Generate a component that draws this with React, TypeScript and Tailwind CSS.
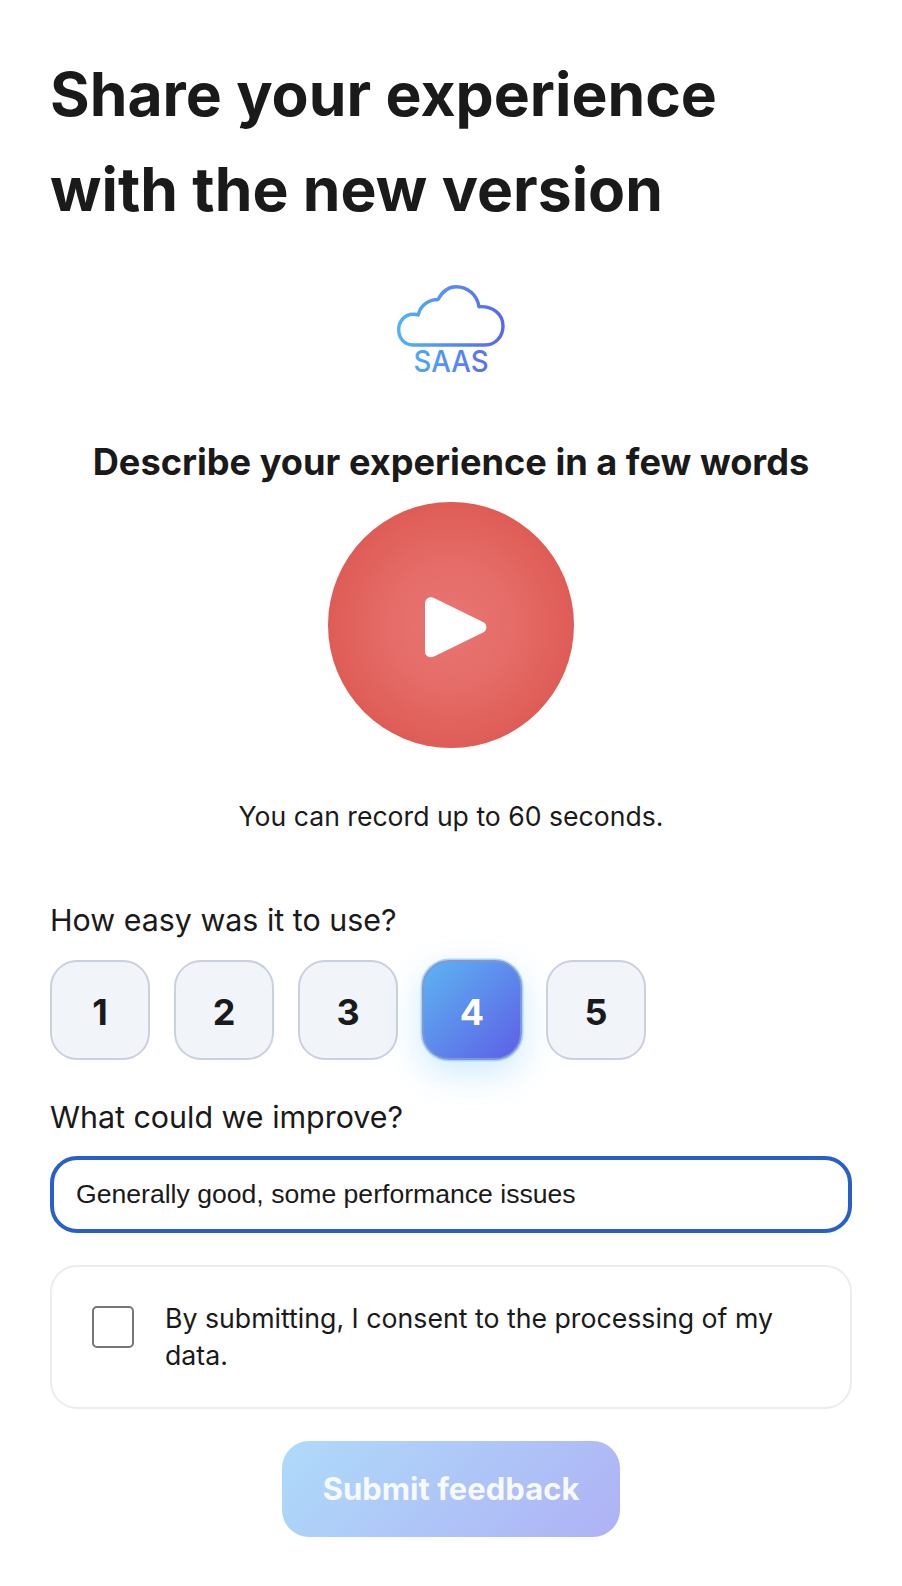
const ratings = [1, 2, 3, 4, 5];

function Logo() {
  return (
    <svg width="110" height="96" viewBox="0 0 110 96" fill="none">
      <defs>
        <linearGradient id="logoStroke" x1="0" y1="0" x2="110" y2="0" gradientUnits="userSpaceOnUse">
          <stop offset="0" stopColor="#4fb5f8" />
          <stop offset="1" stopColor="#5a63ee" />
        </linearGradient>
      </defs>
      <path
        d="M17 61C8 61 2.7 54 2.7 45.5C2.7 37 9 30.3 17 30.3C19 30.3 21 30.5 22.3 31C24 22 32 15.5 42 15.5C46 8 52 2.7 60 2.7C72 2.7 81 11 83 22.7C97 22 107 30 107 42C107 53 99 61 89 61Z"
        stroke="url(#logoStroke)"
        strokeWidth="3.4"
        strokeLinejoin="round"
      />
      <text
        x="55"
        y="88"
        textAnchor="middle"
        fill="url(#logoStroke)"
        fontFamily="Inter, sans-serif"
        fontSize="30"
        fontWeight="500"
        textLength="75"
        lengthAdjust="spacingAndGlyphs"
      >
        SAAS
      </text>
    </svg>
  );
}

export default function App() {
  return (
    <div className="min-h-[1586px] w-[902px] bg-white px-[50px] font-['Inter',sans-serif] text-[#1a1a1a]">
      <h1 className="pt-[47px] text-[60.6px] leading-[95px] font-bold">
        Share your experience
        <br />
        with the new version
      </h1>

      <div className="mt-[47px] flex justify-center">
        <Logo />
      </div>

      <h2 className="mt-[57px] text-center text-[36.2px] leading-[50px] font-bold">
        Describe your experience in a few words
      </h2>

      <div className="mt-[15px] flex justify-center">
        <button className="flex h-[246px] w-[246px] items-center justify-center rounded-full bg-[radial-gradient(circle_closest-side,#e87572_0%,#e56c68_50%,#df5c56_100%)]">
          <svg width="62" height="61" viewBox="0 0 62 61" className="mt-[4px] ml-[10px]">
            <path
              d="M0 7C0 2 4 -1 9 1L58 25C62.5 27.5 62.5 33 58 35.5L9 59.5C4 61.5 0 59 0 54Z"
              fill="white"
            />
          </svg>
        </button>
      </div>

      <p className="mt-[50px] text-center text-[26.6px] leading-[36px]">You can record up to 60 seconds.</p>

      <p className="mt-[66px] text-[30.4px] leading-[40px]">How easy was it to use?</p>

      <div className="mt-[20px] flex gap-[24px]">
        {ratings.map((n) =>
          n === 4 ? (
            <button
              key={n}
              className="h-[100px] w-[100px] rounded-[27px] border-2 border-[#7f96da] bg-[linear-gradient(135deg,#5db4f1,#5e5fe6)] pt-[3px] text-[36px] font-bold text-white shadow-[0_0_0_1.5px_#a9d8f5,0_12px_36px_rgba(79,181,248,0.3)]"
            >
              {n}
            </button>
          ) : (
            <button
              key={n}
              className="h-[100px] w-[100px] rounded-[27px] border-2 border-[#c9d0e0] bg-[#f1f4f9] pt-[3px] text-[36px] font-bold text-[#1a1a1a]"
            >
              {n}
            </button>
          )
        )}
      </div>

      <p className="mt-[37px] text-[30.4px] leading-[40px]">What could we improve?</p>

      <input
        readOnly
        value="Generally good, some performance issues"
        className="mt-[19px] h-[77px] w-full rounded-[27px] border-[4px] border-[#2660c8] bg-white px-[22px] font-['Liberation_Sans',sans-serif] text-[26.6px] text-[#1a1a1a] outline-none"
      />

      <label className="mt-[32px] flex h-[144px] items-start rounded-[27px] border-2 border-[#e9ecf1] pt-[33px] pl-[40px] pr-[40px]">
        <span className="mt-[6px] h-[42px] w-[42px] shrink-0 rounded-[5px] border-2 border-[#767676] bg-white" />
        <span className="ml-[31px] text-[26.7px] leading-[37px]">
          By submitting, I consent to the processing of my data.
        </span>
      </label>

      <div className="mt-[32px] flex justify-center">
        <button className="h-[96px] w-[338px] rounded-[27px] bg-[linear-gradient(135deg,#aedbfa,#afb1f5)] text-[31px] font-bold text-[#f6fafe]">
          Submit feedback
        </button>
      </div>
    </div>
  );
}
